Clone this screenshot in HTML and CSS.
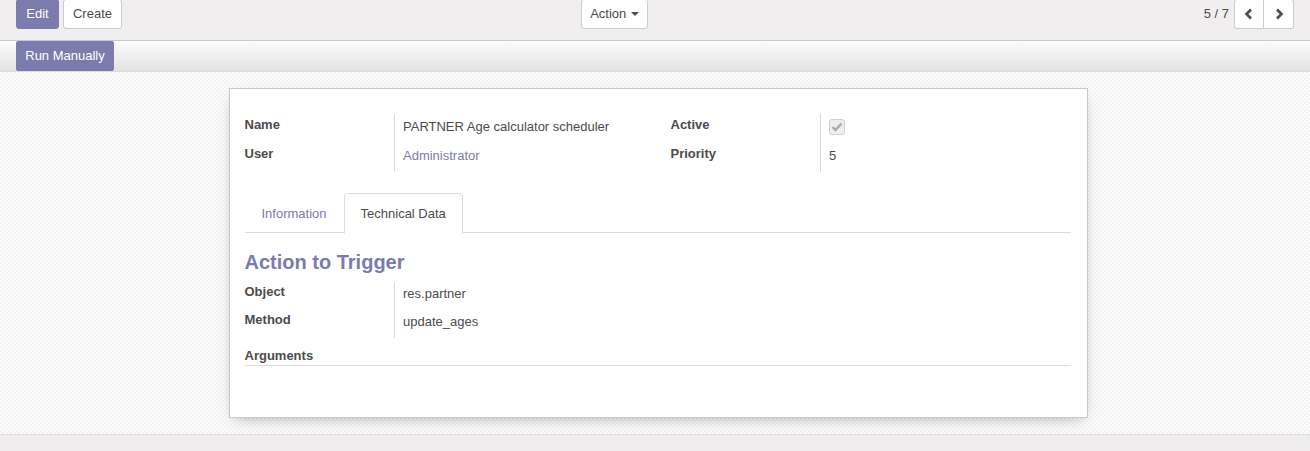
FILE: index.html
```html
<!DOCTYPE html>
<html>
<head>
<meta charset="utf-8">
<link rel="stylesheet" href="styles.css">
</head>
<body>
<div class="app">
  <div class="cp-top">
    <div class="cp-left">
      <button class="btn btn-primary">Edit</button>
      <button class="btn btn-default">Create</button>
    </div>
    <div class="cp-mid">
      <button class="btn btn-default btn-action">Action <span class="caret"></span></button>
    </div>
    <div class="cp-right">
      <span class="pager-value">5 / 7</span>
      <div class="pager-btns">
        <button class="btn btn-default btn-pager"><svg width="12" height="12" viewBox="0 0 12 12"><path d="M8 1.5 L3.5 6 L8 10.5" fill="none" stroke="#4c4c4c" stroke-width="2.6"/></svg></button>
        <button class="btn btn-default btn-pager"><svg width="12" height="12" viewBox="0 0 12 12"><path d="M4 1.5 L8.5 6 L4 10.5" fill="none" stroke="#4c4c4c" stroke-width="2.6"/></svg></button>
      </div>
    </div>
  </div>
  <div class="statusbar">
    <button class="btn btn-primary btn-run">Run Manually</button>
  </div>
  <div class="sheet-bg">
    <div class="sheet">
      <div class="groups">
        <table class="group">
          <tr><td class="lbl">Name</td><td class="val">PARTNER Age calculator scheduler</td></tr>
          <tr><td class="lbl">User</td><td class="val"><span class="link">Administrator</span></td></tr>
        </table>
        <table class="group group-right">
          <tr><td class="lbl">Active</td><td class="val"><span class="checkbox"><svg width="12" height="10" viewBox="0 0 12 10"><path d="M1.5 5 L4.5 8 L10.5 1.5" fill="none" stroke="#a8a8a8" stroke-width="2.4"/></svg></span></td></tr>
          <tr><td class="lbl">Priority</td><td class="val">5</td></tr>
        </table>
      </div>
      <div class="tabs">
        <div class="tab">Information</div>
        <div class="tab tab-active">Technical Data</div>
      </div>
      <h2 class="section-title">Action to Trigger</h2>
      <table class="group group-tech">
        <tr><td class="lbl">Object</td><td class="val">res.partner</td></tr>
        <tr><td class="lbl">Method</td><td class="val">update_ages</td></tr>
      </table>
      <div class="args">Arguments</div>
    </div>
  </div>
  <div class="footer"></div>
</div>
</body>
</html>
```

FILE: styles.css
```css
html, body {
  margin: 0;
  padding: 0;
  height: 451px;
  overflow: hidden;
}
body {
  font-family: "Liberation Sans", Arial, sans-serif;
  font-size: 13px;
  color: #4c4c4c;
}
.app {
  display: flex;
  flex-direction: column;
  height: 451px;
}
.btn {
  font-family: inherit;
  font-size: 13px;
  border-radius: 3px;
  height: 30px;
  padding: 0 10px;
  cursor: pointer;
  line-height: 28px;
  box-sizing: border-box;
}
.btn-primary {
  background: #7c7bad;
  color: #fff;
  border: 1px solid #7c7bad;
}
.btn-default {
  background: #fff;
  color: #4c4c4c;
  border: 1px solid #ccc;
}
.cp-top {
  flex-shrink: 0;
  height: 41px;
  box-sizing: border-box;
  background: #f0eeee;
  border-bottom: 1px solid #c8c8c8;
  display: flex;
  align-items: flex-start;
  padding: 0 16px;
}
.cp-left {
  display: flex;
  gap: 4px;
  margin-top: -1px;
}
.cp-left .btn-primary { width: 43px; padding: 0; }
.cp-left .btn-default { width: 59px; padding: 0; }
.cp-mid {
  flex: 1;
  display: flex;
  justify-content: flex-start;
  margin-top: -1px;
  padding-left: 459px;
}
.btn-action {
  width: 67px;
  padding: 0;
}
.caret {
  display: inline-block;
  width: 0;
  height: 0;
  border-left: 4px solid transparent;
  border-right: 4px solid transparent;
  border-top: 4px solid #4c4c4c;
  vertical-align: middle;
  margin-left: 1px;
  margin-top: -2px;
}
.cp-right {
  display: flex;
  align-items: center;
  margin-top: -1px;
}
.pager-value {
  margin-right: 5px;
  line-height: 30px;
}
.pager-btns {
  display: flex;
}
.btn-pager {
  width: 30px;
  padding: 0;
  display: flex;
  align-items: center;
  justify-content: center;
}
.btn-pager:first-child {
  border-radius: 3px 0 0 3px;
}
.btn-pager:last-child {
  border-radius: 0 3px 3px 0;
  border-left: none;
}
.statusbar {
  flex-shrink: 0;
  height: 31px;
  box-sizing: border-box;
  background: linear-gradient(to bottom, #fcfcfc, #e2e2e2);
  border-bottom: 1px solid #dcdcdc;
  padding: 0 16px;
  display: flex;
  align-items: flex-start;
}
.btn-run {
  width: 98px;
  padding: 0;
  border-radius: 2px;
}
.sheet-bg {
  flex-shrink: 0;
  height: 362px;
  box-sizing: border-box;
  background-color: #f9f9f9;
  background-image: repeating-conic-gradient(#f3f3f3 0 25%, #fcfcfc 0 50%);
  background-size: 4px 4px;
  padding: 16px 0 16px;
  display: flex;
  justify-content: center;
  align-items: flex-start;
}
.sheet {
  width: 859px;
  height: 330px;
  box-sizing: border-box;
  background: #fff;
  border: 1px solid #c8c8c8;
  box-shadow: 0 5px 14px -6px rgba(0,0,0,0.35);
  padding: 25px 16px 0 15px;
  margin-left: 6px;
}
.groups {
  display: grid;
  grid-template-columns: 414px 1fr;
}
.group {
  border-collapse: collapse;
}
.group-right {
  margin-left: 12px;
}
.group td {
  padding: 0;
  vertical-align: top;
  height: 29px;
  box-sizing: border-box;
}
.lbl {
  width: 150px;
  font-weight: bold;
  padding-top: 2px !important;
  line-height: 18px;
}
.val {
  border-left: 1px solid #d8d8d8;
  padding-left: 8px !important;
  padding-top: 4px !important;
  line-height: 18px;
}
.link {
  color: #7c7bad;
}
.checkbox {
  display: inline-flex;
  width: 16px;
  height: 16px;
  box-sizing: border-box;
  border: 1px solid #cfcfcf;
  border-radius: 3px;
  background: #eee;
  align-items: center;
  justify-content: center;
  margin-top: 1px;
}
.tabs {
  display: flex;
  margin-top: 21px;
  border-bottom: 1px solid #dcdcdc;
  height: 40px;
  box-sizing: border-box;
}
.tab {
  padding: 0 16px;
  line-height: 40px;
  height: 40px;
  box-sizing: border-box;
  color: #7c7bad;
  border: 1px solid transparent;
  border-radius: 4px 4px 0 0;
}
.tab-active {
  color: #4c4c4c;
  background: #fff;
  border-color: #dcdcdc;
  border-bottom-color: #fff;
  height: 41px;
  margin-bottom: -1px;
  line-height: 39px;
}
.section-title {
  margin: 16px 0 7px;
  font-size: 20px;
  line-height: 26px;
  font-weight: bold;
  color: #7c7bad;
}
.group-tech td {
  height: 28px;
}
.group-tech .lbl {
  padding-top: 1px !important;
}
.group-tech .val {
  padding-top: 3px !important;
}
.args {
  margin-top: 9px;
  font-weight: bold;
  line-height: 18px;
  padding-bottom: 0;
  border-bottom: 1px solid #dcdcdc;
}
.footer {
  flex-shrink: 0;
  height: 17px;
  box-sizing: border-box;
  background: #efeded;
  border-top: 1px solid #dcdcdc;
}
```
